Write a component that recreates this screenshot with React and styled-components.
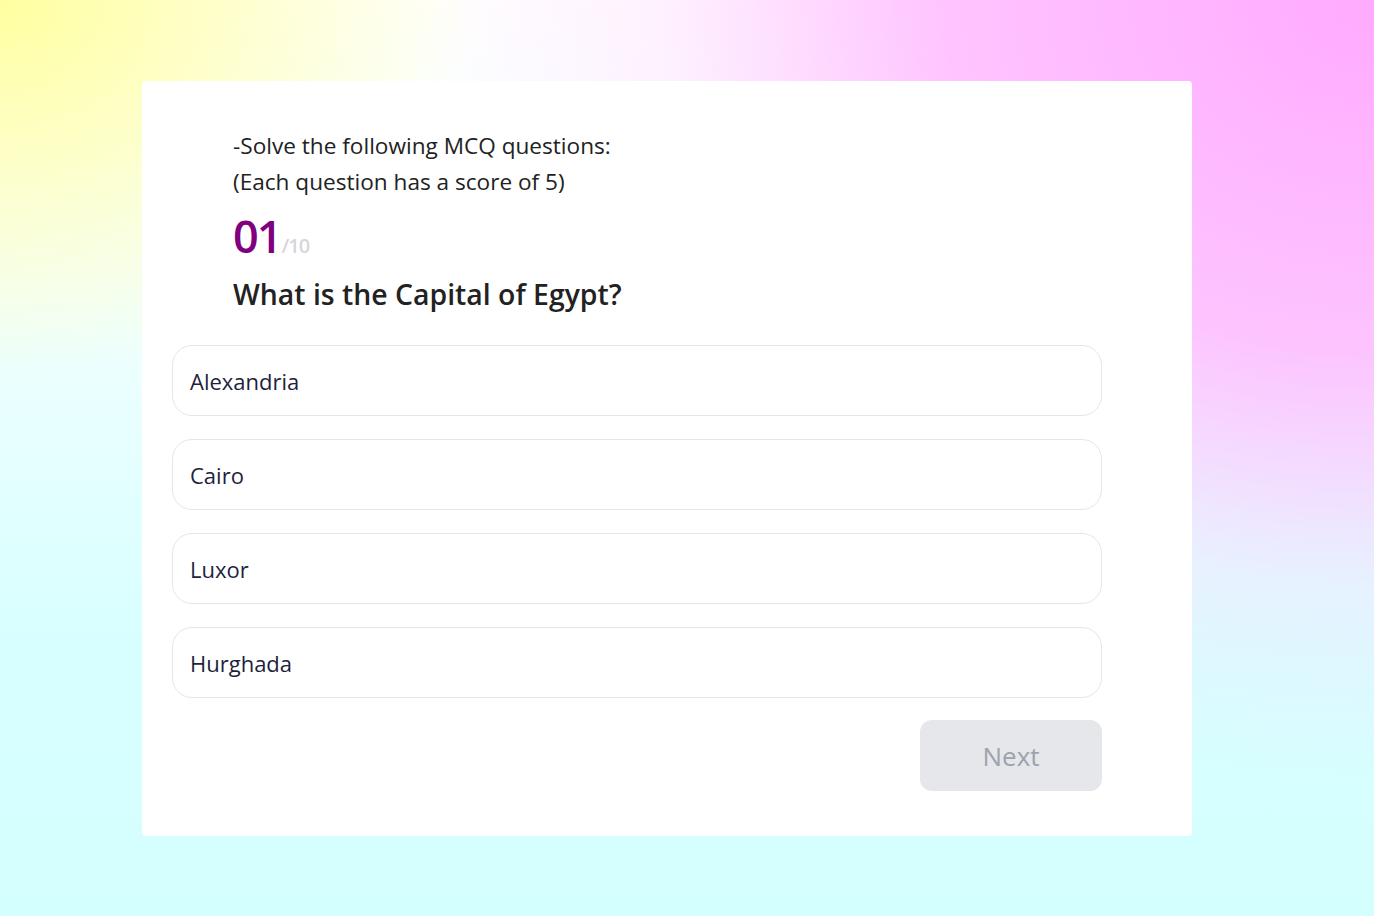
import styled, { createGlobalStyle } from "styled-components";

const GlobalStyle = createGlobalStyle`
  html, body {
    margin: 0;
    padding: 0;
  }
  body {
    font-family: "Open Sans", "Noto Sans", sans-serif;
    min-height: 916px;
    background:
      radial-gradient(ellipse 950px 780px at 100% 0%, rgba(255, 170, 255, 1) 0%, rgba(255, 185, 255, 0.85) 45%, rgba(255, 210, 255, 0.3) 75%, rgba(255, 220, 255, 0) 100%),
      radial-gradient(ellipse 480px 380px at 0% 0%, rgba(255, 255, 160, 1) 0%, rgba(255, 255, 180, 0.7) 45%, rgba(255, 255, 255, 0) 100%),
      linear-gradient(180deg, #ffffff 0%, #f4ffff 28%, #d8ffff 70%, #d4ffff 100%);
  }
`;

const Page = styled.main`
  display: flex;
  align-items: flex-start;
  padding: 81px 182px 81px 142px;
  min-height: 916px;
  box-sizing: border-box;
`;

const Card = styled.section`
  flex: 1;
  background: #ffffff;
  border-radius: 4px;
  padding: 47px 90px 45px 30px;
  display: flex;
  flex-direction: column;
`;

const Header = styled.header`
  padding-left: 61px;
  color: #222222;
`;

const Instructions = styled.p`
  margin: 0;
  font-size: 22.6px;
  line-height: 36px;
`;

const Counter = styled.div`
  display: flex;
  align-items: baseline;
  margin-top: 8px;
`;

const Current = styled.span`
  font-size: 45px;
  line-height: 56px;
  font-weight: 600;
  color: #800080;
  letter-spacing: -2px;
`;

const Total = styled.span`
  font-size: 20px;
  font-weight: 600;
  color: #d6d6dc;
  letter-spacing: -1px;
  margin-left: 1px;
`;

const Question = styled.h2`
  margin: 10px 0 0;
  font-size: 28.4px;
  line-height: 40px;
  font-weight: 600;
  color: #222222;
`;

const Options = styled.div`
  display: flex;
  flex-direction: column;
  gap: 23px;
  margin-top: 31px;
`;

const Option = styled.button`
  height: 71px;
  box-sizing: border-box;
  background: #ffffff;
  border: 1px solid #e6e6e8;
  border-radius: 20px;
  padding: 0 17px;
  text-align: left;
  font-family: inherit;
  font-size: 22px;
  color: #221f3d;
  cursor: pointer;
`;

const Footer = styled.div`
  display: flex;
  justify-content: flex-end;
  margin-top: 22px;
`;

const NextButton = styled.button`
  width: 182px;
  height: 71px;
  border: none;
  border-radius: 12px;
  background: #e5e7eb;
  color: #9ca3af;
  font-family: inherit;
  font-size: 26px;
  cursor: not-allowed;
`;

const options = ["Alexandria", "Cairo", "Luxor", "Hurghada"];

const App = () => {
  return (
    <>
      <GlobalStyle />
      <Page>
        <Card>
          <Header>
            <Instructions>
              -Solve the following MCQ questions:
              <br />
              (Each question has a score of 5)
            </Instructions>
            <Counter>
              <Current>01</Current>
              <Total>/10</Total>
            </Counter>
            <Question>What is the Capital of Egypt?</Question>
          </Header>
          <Options>
            {options.map((o) => (
              <Option key={o}>{o}</Option>
            ))}
          </Options>
          <Footer>
            <NextButton disabled>Next</NextButton>
          </Footer>
        </Card>
      </Page>
    </>
  );
};

export default App;
